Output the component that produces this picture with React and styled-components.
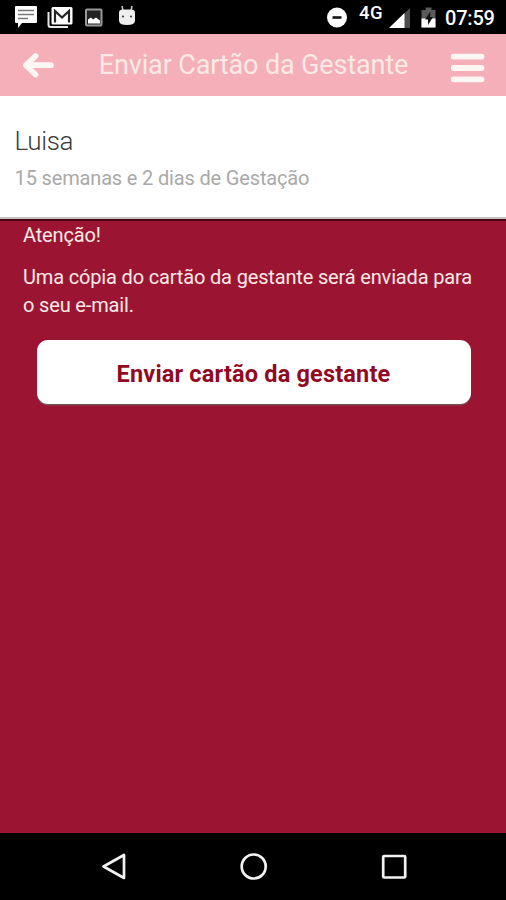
import React from 'react';
import styled, { createGlobalStyle } from 'styled-components';

const theme = {
  colors: {
    pink: '#f4afb8',
    wine: '#9b1533',
    button: '#920a22',
    cream: '#fbe9e6',
    grey: '#a9a9a9',
    dark: '#3c3c3c',
  },
};

const App = () => {
  return (
    <Screen>
      <GlobalStyle />
      <StatusBar>
        <StatusIcons width="140" height="34" viewBox="0 0 140 34">
          <path d="M16 6h20q1 0 1 1v15q0 1-1 1H22l-4 5v-5h-2q-1 0-1-1V7q0-1 1-1z" fill="#fff" />
          <path d="M18 10.500h16M18 14.500h16M18 18.500h10" stroke="#777" strokeWidth="1.700" />
          <path d="M48.500 12v13q0 2 2 2H68" fill="none" stroke="#e8e8e8" strokeWidth="2" />
          <rect x="51.500" y="7" width="21" height="17.500" rx="1.500" fill="#fff" />
          <path d="M55 22.500V11l7 6.500 7-6.500v11.500" fill="none" stroke="#222" strokeWidth="2.200" />
          <rect x="86" y="9.500" width="15.500" height="16" rx="1" fill="#222" stroke="#999" strokeWidth="2" />
          <path d="M88 23.500v-4l3-2 2 2 3-2 4 3v3z" fill="#fff" />
          <path d="M123 11l-1-5M131 11l1-5" stroke="#ccc" strokeWidth="1.500" />
          <path d="M119 12.500q0-3 4-3h8q4 0 4 3v8q0 4.500-8 4.500t-8-4.500z" fill="#eee" />
          <circle cx="123" cy="16.500" r="1.100" fill="#444" />
          <circle cx="131" cy="16.500" r="1.100" fill="#444" />
        </StatusIcons>
        <StatusRight>
          <svg width="22" height="34" viewBox="0 0 22 34">
            <circle cx="11" cy="17.500" r="10" fill="#fff" />
            <path d="M6.500 17.500h9" stroke="#111" strokeWidth="2.600" />
          </svg>
          <Network>4G</Network>
          <svg width="50" height="34" viewBox="0 0 50 34">
            <path d="M22 8v20H1z" fill="#4c4c4c" />
            <path d="M16.500 13V28H1z" fill="#fff" />
            <path d="M33.500 10h4V7.500h6V10h4v17.500h-14z" fill="#5a5a5a" />
            <path d="M33.500 18.500h14v9h-14z" fill="#fff" />
            <path d="M42.500 11.500l-5.500 8h3v5.500l5-8h-3z" fill="#111" />
          </svg>
          <Clock>07:59</Clock>
        </StatusRight>
      </StatusBar>
      <Header>
        <IconButton aria-label="Voltar">
          <svg width="34" height="26" viewBox="0 0 34 26">
            <path d="M14.500 4L5 13.200l9.500 9.300M6 13.200h24" fill="none" stroke="#fdf6f3" strokeWidth="5.800" strokeLinecap="round" strokeLinejoin="round" />
          </svg>
        </IconButton>
        <Title>Enviar Cartão da Gestante</Title>
        <IconButton aria-label="Menu">
          <svg width="34" height="36" viewBox="0 0 34 36">
            <path d="M2.500 9.700h28M2.500 21h28M2.500 32.300h28" stroke="#fdf6f3" strokeWidth="5.800" strokeLinecap="round" />
          </svg>
        </IconButton>
      </Header>
      <Profile>
        <Name>Luisa</Name>
        <Weeks>15 semanas e 2 dias de Gestação</Weeks>
      </Profile>
      <Content>
        <Text>Atenção!</Text>
        <Text>Uma cópia do cartão da gestante será enviada para o seu e-mail.</Text>
        <SendButton>Enviar cartão da gestante</SendButton>
      </Content>
      <NavBar>
        <svg width="28" height="30" viewBox="0 0 28 30">
          <path d="M24 3v23L3.500 14.500z" fill="none" stroke="#f2f2f2" strokeWidth="2.700" strokeLinejoin="round" />
        </svg>
        <svg width="28" height="30" viewBox="0 0 28 30">
          <circle cx="13.700" cy="14.500" r="12" fill="none" stroke="#f2f2f2" strokeWidth="2.700" />
        </svg>
        <svg width="28" height="30" viewBox="0 0 28 30">
          <rect x="3.200" y="4" width="22" height="21.500" rx="1" fill="none" stroke="#f2f2f2" strokeWidth="2.700" />
        </svg>
      </NavBar>
    </Screen>
  );
};

export default App;

const GlobalStyle = createGlobalStyle`
  * {
    box-sizing: border-box;
  }

  body {
    margin: 0;
    font-family: Roboto, sans-serif;
  }

  svg {
    display: block;
    flex: none;
  }
`;

const Screen = styled.div`
  display: flex;
  flex-direction: column;
  width: 506px;
  height: 900px;
  overflow: hidden;
  background-color: ${theme.colors.wine};
`;

const StatusBar = styled.div`
  display: flex;
  justify-content: space-between;
  flex: none;
  height: 34px;
  padding-right: 11px;
  background-color: black;
  color: white;
`;

const StatusIcons = styled.svg``;

const StatusRight = styled.div`
  display: flex;
  width: 169px;
`;

const Network = styled.span`
  width: 26px;
  margin: 3px 3px 0 11px;
  font-size: 18.5px;
  font-weight: 500;
  letter-spacing: 0.5px;
  line-height: 21px;
`;

const Clock = styled.span`
  margin-left: 7px;
  font-size: 20px;
  font-weight: 500;
  letter-spacing: -0.2px;
  line-height: 36px;
`;

const Header = styled.header`
  display: flex;
  align-items: center;
  justify-content: space-between;
  flex: none;
  height: 62px;
  padding: 0 21px;
  background-color: ${theme.colors.pink};
`;

const IconButton = styled.button`
  padding: 0;
  border: none;
  background: none;
`;

const Title = styled.h1`
  margin: 0 0 0 1px;
  color: ${theme.colors.cream};
  font-size: 27px;
  font-weight: 400;
  letter-spacing: -0.14px;
  line-height: 60px;
  white-space: nowrap;
`;

const Profile = styled.section`
  flex: none;
  height: 125px;
  padding: 29px 14.6px 0;
  background-color: white;
  border-bottom: 2px solid #4a0615;
  box-shadow: inset 0 -2px 0 #c9c4c4;
`;

const Name = styled.div`
  color: ${theme.colors.dark};
  font-size: 26px;
  font-weight: 300;
  letter-spacing: -0.4px;
  line-height: 32px;
`;

const Weeks = styled.div`
  margin-top: 9px;
  color: ${theme.colors.grey};
  font-size: 20px;
  letter-spacing: -0.16px;
  line-height: 24px;
`;

const Content = styled.main`
  flex: 1;
  padding: 0 23px;
`;

const Text = styled.p`
  margin: 0 0 14px;
  color: ${theme.colors.cream};
  font-size: 20px;
  letter-spacing: -0.16px;
  line-height: 28px;
`;

const SendButton = styled.button`
  display: block;
  width: 434px;
  height: 64px;
  margin: 21px 0 0 13.5px;
  padding: 3px 0 0;
  border: none;
  border-radius: 11px;
  background-color: white;
  box-shadow: 0 1.5px 0 #77504f;
  color: ${theme.colors.button};
  font-family: inherit;
  font-size: 23.5px;
  font-weight: 700;
  letter-spacing: 0.18px;
`;

const NavBar = styled.nav`
  display: flex;
  align-items: center;
  justify-content: space-between;
  flex: none;
  height: 67px;
  padding: 0 98px 0 100px;
  background-color: black;
`;
